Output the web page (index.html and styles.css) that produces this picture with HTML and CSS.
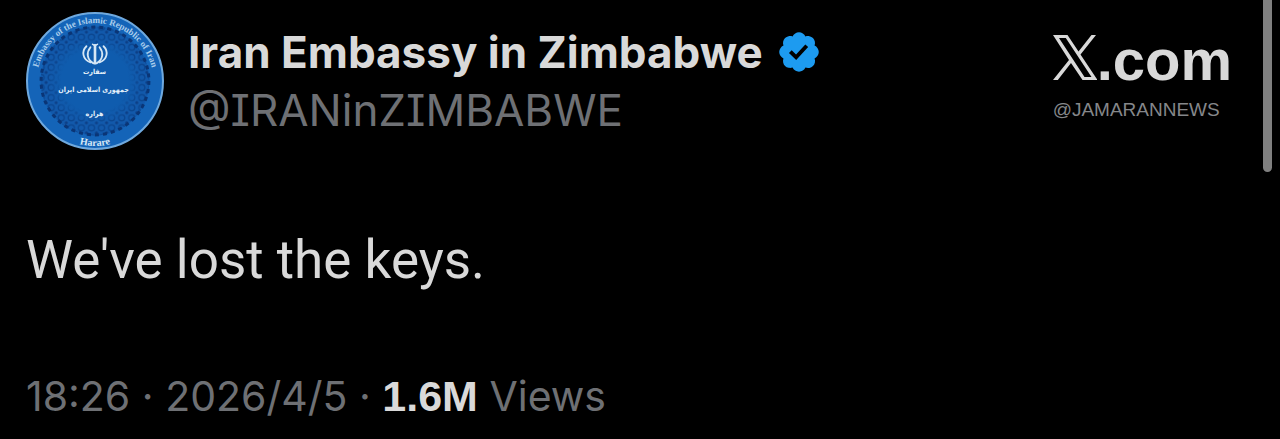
FILE: index.html
```html
<!DOCTYPE html>
<html lang="en">
<head>
<meta charset="UTF-8">
<meta name="viewport" content="width=device-width, initial-scale=1.0">
<title>Iran Embassy in Zimbabwe</title>
<link rel="stylesheet" href="styles.css">
</head>
<body>
<article class="post">
  <header class="post-header">
    <svg class="avatar" viewBox="0 0 137 137" role="img" aria-label="Embassy seal">
      <defs>
        <path id="arc-top" d="M12.5 54 A58 58 0 0 1 124.500 54"/>
        <path id="arc-bottom" d="M20 111 A64.5 64.5 0 0 0 117 111"/>
        <pattern id="lattice" width="10" height="10" patternUnits="userSpaceOnUse">
          <circle cx="5" cy="5" r="3" fill="none" stroke="#0b4690" stroke-width="1.4"/>
          <circle cx="0" cy="0" r="1.6" fill="#0d3f86"/>
          <circle cx="10" cy="0" r="1.6" fill="#0d3f86"/>
          <circle cx="0" cy="10" r="1.6" fill="#0d3f86"/>
          <circle cx="10" cy="10" r="1.6" fill="#0d3f86"/>
        </pattern>
        <radialGradient id="center">
          <stop offset="0.72" stop-color="#0f5cae"/>
          <stop offset="1" stop-color="#0f5cae" stop-opacity="0"/>
        </radialGradient>
      </defs>
      <circle cx="68.5" cy="68.5" r="67.5" fill="#1464b8" stroke="#6fa9de" stroke-width="2"/>
      <circle cx="68.5" cy="68.5" r="54" fill="#1259ab"/>
      <circle cx="68.5" cy="68.5" r="54" fill="url(#lattice)"/>
      <circle cx="68.5" cy="68.5" r="53.5" fill="none" stroke="#0a3576" stroke-width="3" stroke-dasharray="4 4"/>
      <ellipse cx="68.5" cy="68" rx="46" ry="43" fill="url(#center)"/>
      <g fill="none" stroke="#d6e7f5" stroke-width="1.8" stroke-linecap="round">
        <path d="M68.5 33v18" stroke-width="2.6"/>
        <path d="M64 35c-4 5-4 12 3 16M73 35c4 5 4 12-3 16"/>
        <path d="M60 34c-5 5-4 13 4 16M77 34c5 5 4 13-4 16"/>
        <path d="M66 32q2.500 2 5 0" stroke-width="1.4"/>
      </g>
      <text class="seal-ring"><textPath href="#arc-top" startOffset="50%">Embassy of the Islamic Republic of Iran</textPath></text>
      <text class="seal-ring seal-city"><textPath href="#arc-bottom" startOffset="50%">Harare</textPath></text>
      <text class="seal-text" x="68" y="62">سفارت</text>
      <text class="seal-text" x="67" y="79">جمهوری اسلامی ایران</text>
      <text class="seal-text" x="68" y="103">هراره</text>
    </svg>
    <div class="author">
      <div class="name-row">
        <h1 class="name">Iran Embassy in Zimbabwe</h1>
        <svg class="verified" viewBox="1.500 1.500 19 19" role="img" aria-label="Verified account">
          <path fill="#1d9bf0" d="M20.396 11c-.018-.646-.215-1.275-.57-1.816-.354-.54-.852-.972-1.438-1.246.223-.607.27-1.264.14-1.897-.131-.634-.437-1.218-.882-1.687-.47-.445-1.053-.75-1.687-.882-.633-.13-1.290-.083-1.897.14-.273-.587-.704-1.086-1.245-1.440S11.647 1.620 11 1.604c-.646.017-1.273.213-1.813.568s-.969.854-1.240 1.440c-.608-.223-1.267-.272-1.902-.14-.635.13-1.220.436-1.690.882-.445.47-.749 1.055-.878 1.688-.13.633-.08 1.290.144 1.896-.587.274-1.087.705-1.443 1.245-.356.54-.555 1.170-.574 1.817.02.647.218 1.276.574 1.817.356.54.856.972 1.443 1.245-.224.606-.274 1.263-.144 1.896.13.634.433 1.218.877 1.688.47.443 1.054.747 1.687.878.633.132 1.290.084 1.897-.136.274.586.705 1.084 1.246 1.439.54.354 1.170.551 1.816.569.647-.016 1.276-.213 1.817-.567s.972-.854 1.245-1.440c.604.239 1.266.296 1.903.164.636-.132 1.220-.447 1.680-.907.46-.46.776-1.044.908-1.681s.075-1.299-.165-1.903c.586-.274 1.084-.705 1.439-1.246.354-.54.551-1.170.569-1.816zM9.662 14.850l-3.429-3.428 1.293-1.302 2.072 2.072 4.400-4.794 1.347 1.246z"/>
        </svg>
      </div>
      <div class="handle">@IRANinZIMBABWE</div>
    </div>
    <div class="source">
      <div class="site">
        <svg class="x-logo" viewBox="0 0 44 45" role="img" aria-label="X">
          <path fill="#d9d9d9" fill-rule="evenodd" d="M0 0H14.500L25.500 16.500L38.500 0H43L27.500 19.500L44.500 45H29.500L18 28L4.800 45H0L16 25ZM6 3L31.500 42H38.500L12.800 3Z"/>
        </svg>
        <span class="domain">.com</span>
      </div>
      <div class="credit">@JAMARANNEWS</div>
    </div>
  </header>
  <p class="message">We've lost the keys.</p>
  <footer class="meta">
    <time datetime="2026-04-05T18:26">18:26 · 2026/4/5</time> · <strong class="count">1.6M</strong> Views
  </footer>
</article>
<div class="scroll-thumb"></div>
</body>
</html>
```
FILE: styles.css
```css
body {
  margin: 0;
  background: #000;
  color: #d9d9d9;
  font-family: Inter, sans-serif;
}
.post {
  padding: 12px 48px 12px 26px;
}
.post-header {
  display: flex;
  align-items: flex-start;
  gap: 24px;
}
.avatar {
  width: 138px;
  height: 138px;
  flex: none;
}
.seal-ring {
  font: bold 9px "Liberation Serif", serif;
  fill: #a9cdec;
  text-anchor: middle;
}
.seal-city {
  font-size: 10px;
  fill: #d6e7f5;
}
.seal-text {
  font: bold 7px "DejaVu Sans Condensed", "DejaVu Sans", sans-serif;
  fill: #e4f0fa;
  text-anchor: middle;
}
.author {
  flex: 1;
  padding-top: 11px;
}
.name-row {
  display: flex;
  align-items: center;
  gap: 16px;
}
.name {
  margin: 0;
  font-size: 44px;
  line-height: 58px;
}
.verified {
  width: 40px;
  height: 40px;
}
.handle {
  font-size: 44px;
  line-height: 58px;
  font-feature-settings: "cv08";
  color: #6e7074;
}
.source {
  padding-top: 16px;
}
.site {
  display: flex;
  align-items: baseline;
}
.x-logo {
  width: 44px;
  height: 45px;
}
.domain {
  font: bold 58px/64px "Liberation Sans", sans-serif;
}
.credit {
  margin-top: 6px;
  font: 19px/24px "Liberation Sans", sans-serif;
  color: #85878a;
}
.message {
  margin: 76px 0 0;
  font-family: Roboto, sans-serif;
  font-size: 53px;
  line-height: 68px;
}
.meta {
  margin-top: 74px;
  font-size: 41px;
  line-height: 56px;
  color: #6e7074;
}
.count {
  font-family: "Liberation Sans", sans-serif;
  font-size: 43px;
  color: #d9d9d9;
}
.scroll-thumb {
  position: absolute;
  top: 0;
  right: 8px;
  width: 9px;
  height: 172px;
  border-radius: 0 0 5px 5px;
  background: #808080;
}
```
